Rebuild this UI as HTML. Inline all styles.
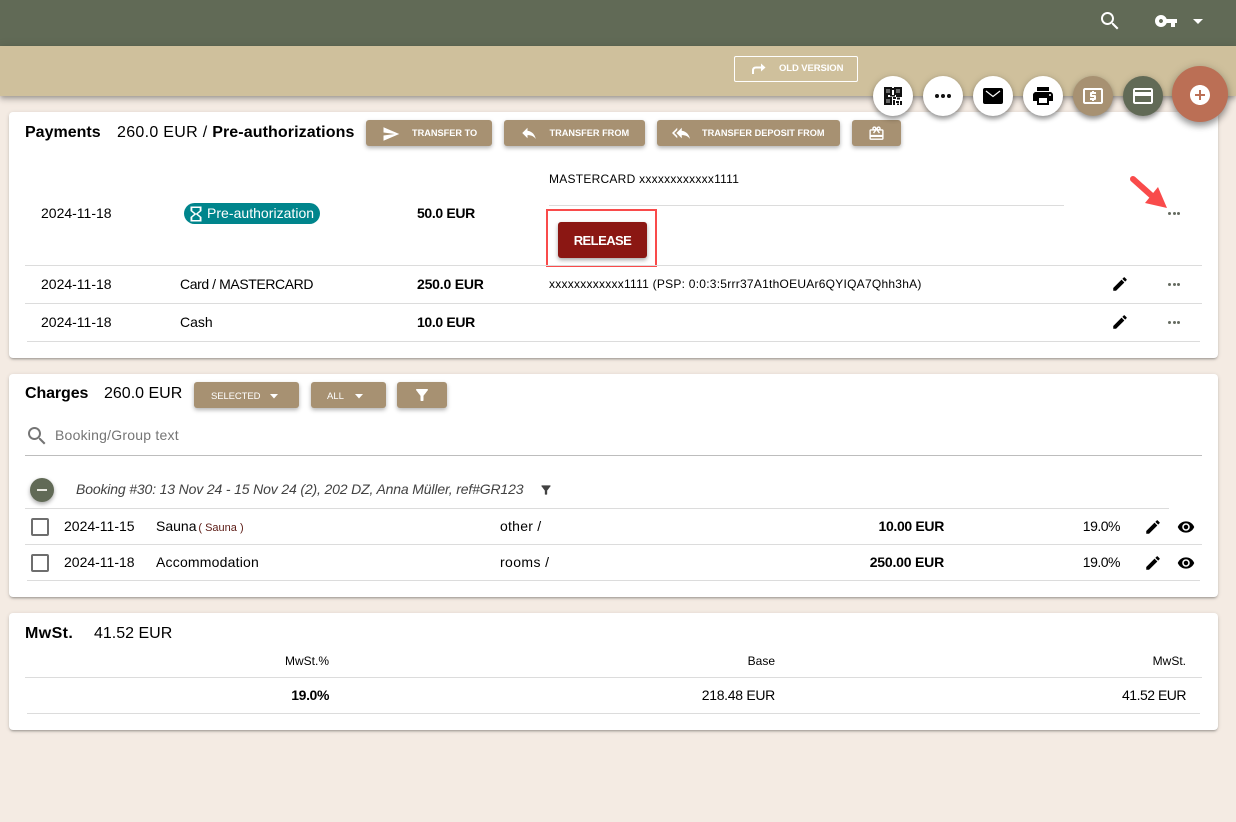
<!DOCTYPE html>
<html><head><meta charset="utf-8">
<style>
html,body{margin:0;padding:0;width:1236px;height:822px;overflow:hidden;background:#f4ebe3;font-family:"Liberation Sans",sans-serif;color:#000;font-size:14px}
.a{position:absolute}
.t{position:absolute;white-space:nowrap;line-height:20px;height:20px}
.r{text-align:right}
b{font-weight:700}
.card{position:absolute;left:9px;width:1209px;background:#fff;border-radius:4px;box-shadow:0 2px 2px -1px rgba(0,0,0,.3),0 1px 4px rgba(0,0,0,.14)}
.l{position:absolute;height:1px;background:#dcdcdc}
.btn{position:absolute;background:#a79172;border-radius:3px;box-shadow:0 2px 4px rgba(0,0,0,.3);color:#fff;font-weight:700;font-size:9.2px;line-height:27px;height:26px;white-space:nowrap}
.btn span{position:absolute;top:0}
svg{position:absolute;display:block}
.fab{position:absolute;width:40px;height:40px;border-radius:50%;background:#fff;box-shadow:0 3px 5px rgba(0,0,0,.35),0 1px 8px rgba(0,0,0,.15)}
.dots{position:absolute;width:13px;height:4px}
.dots i{position:absolute;top:1px;width:3px;height:3px;border-radius:50%;background:#666b61}
.cb{position:absolute;left:31px;width:14px;height:14px;border:2px solid #6e6e6e;border-radius:2px;background:#fff}
.k{position:absolute;width:4.2px;height:4.2px;border-radius:50%;background:#111;top:94px}
</style></head><body>

<div class="a" style="left:0;top:0;width:1236px;height:46px;background:#616a56"></div>
<div class="a" style="left:0;top:46px;width:1236px;height:50px;background:#cfc09c;box-shadow:0 2px 4px -1px rgba(0,0,0,.2),0 4px 5px rgba(0,0,0,.14),0 1px 10px rgba(0,0,0,.12)"></div>

<svg style="left:1098px;top:9px" width="24" height="24" viewBox="0 0 24 24" fill="#fff"><path d="M15.5 14h-.79l-.28-.27C15.41 12.59 16 11.11 16 9.5 16 5.91 13.09 3 9.5 3S3 5.91 3 9.5 5.91 16 9.5 16c1.61 0 3.09-.59 4.23-1.57l.27.28v.79l5 4.99L20.49 19l-4.99-5zm-6 0C7.01 14 5 11.99 5 9.5S7.01 5 9.5 5 14 7.01 14 9.5 11.99 14 9.5 14z"/></svg>
<svg style="left:1154px;top:9px" width="24" height="24" viewBox="0 0 24 24" fill="#fff"><path d="M12.65 10C11.83 7.67 9.61 6 7 6c-3.31 0-6 2.69-6 6s2.69 6 6 6c2.61 0 4.83-1.67 5.65-4H17v4h4v-4h2v-4H12.65zM7 14c-1.1 0-2-.9-2-2s.9-2 2-2 2 .9 2 2-.9 2-2 2z"/></svg>
<svg style="left:1192px;top:18px" width="12" height="7" viewBox="0 0 12 7" fill="#fff"><path d="M1 1h10L6 6z"/></svg>

<div class="a" style="left:734px;top:56px;width:122px;height:24px;border:1px solid #fff;border-radius:2px"></div>
<svg style="left:751px;top:60px" width="16" height="16" viewBox="0 0 16 16" fill="none" stroke="#fff" stroke-width="2"><path d="M2 14V10.5C2 8.5 3 7.5 5 7.5H11"/><path d="M10 3.5L14.5 7.5L10 11.5" fill="#fff" stroke="none"/></svg>
<div class="t" style="left:779px;top:59px;font-size:9.5px;font-weight:700;color:#fff;letter-spacing:-.1px">OLD VERSION</div>

<!-- card 1 -->
<div class="card" style="top:112px;height:246px"></div>
<div class="t" style="left:25px;top:123px;font-size:16px;font-weight:700">Payments</div>
<div class="t" style="left:117px;top:123px;font-size:16px;letter-spacing:.3px">260.0 EUR / <b style="letter-spacing:.1px">Pre-authorizations</b></div>

<div class="btn" style="left:366px;top:120px;width:126px"><svg style="left:16px;top:5px" width="18" height="18" viewBox="0 0 24 24" fill="#fff"><path d="M2.01 21L23 12 2.01 3 2 10l15 2-15 2z"/></svg><span style="left:46px">TRANSFER TO</span></div>
<div class="btn" style="left:504px;top:120px;width:141px"><svg style="left:16px;top:4px" width="18" height="18" viewBox="0 0 24 24" fill="#fff"><path d="M10 9V5l-7 7 7 7v-4.1c5 0 8.5 1.6 11 5.1-1-5-4-10-11-11z"/></svg><span style="left:45.5px">TRANSFER FROM</span></div>
<div class="btn" style="left:657px;top:120px;width:183px"><svg style="left:15px;top:4px" width="18" height="18" viewBox="0 0 24 24" fill="#fff"><path d="M7 8V5l-7 7 7 7v-3l-4-4 4-4zm6 1V5l-7 7 7 7v-4.1c5 0 8.5 1.6 11 5.1-1-5-4-10-11-11z"/></svg><span style="left:45px">TRANSFER DEPOSIT FROM</span></div>
<div class="btn" style="left:852px;top:120px;width:49px"><svg style="left:16px;top:5px" width="17" height="17" viewBox="0 0 24 24" fill="#fff"><path d="M20 6h-2.18c.11-.31.18-.65.18-1 0-1.66-1.34-3-3-3-1.05 0-1.96.54-2.5 1.35l-.5.67-.5-.68C10.96 2.54 10.05 2 9 2 7.34 2 6 3.34 6 5c0 .35.07.69.18 1H4c-1.11 0-1.99.89-1.99 2L2 19c0 1.11.89 2 2 2h16c1.11 0 2-.89 2-2V8c0-1.11-.89-2-2-2zm-5-2c.55 0 1 .45 1 1s-.45 1-1 1-1-.45-1-1 .45-1 1-1zM9 4c.55 0 1 .45 1 1s-.45 1-1 1-1-.45-1-1 .45-1 1-1zm11 15H4v-2h16v2zm0-5H4V8h5.08L7 10.83 8.62 12 11 8.76l1-1.36 1 1.36L15.38 12 17 10.83 14.92 8H20v6z"/></svg></div>

<div class="t" style="left:549px;top:169px;font-size:12px;letter-spacing:.25px">MASTERCARD xxxxxxxxxxxx1111</div>
<div class="l" style="left:549px;top:205px;width:515px"></div>

<div class="t" style="left:41px;top:203px">2024-11-18</div>
<div class="a" style="left:184px;top:203px;width:136px;height:21px;border-radius:11px;background:#00858c"></div>
<svg style="left:184.5px;top:205px" width="22" height="18" viewBox="0 0 24 24" preserveAspectRatio="none" fill="#fff"><path d="M6 2v6h.01L6 8.01 10 12l-4 4 .01.01H6V22h12v-5.99h-.01L18 16l-4-4 4-3.99-.01-.01H18V2H6zm10 14.5V20H8v-3.5l4-4 4 4zm-4-5l-4-4V4h8v3.5l-4 4z"/></svg>
<div class="t" style="left:207px;top:203px;color:#fff;letter-spacing:.03px">Pre-authorization</div>
<div class="t" style="left:417px;top:203px;font-weight:700;letter-spacing:-.35px">50.0 EUR</div>

<div class="a" style="left:546px;top:209px;width:111px;height:58px;border:2px solid #f94b4b;box-sizing:border-box"></div>
<div class="a" style="left:558px;top:222px;width:89px;height:36px;background:#8b1713;border-radius:3px;box-shadow:0 2px 4px rgba(0,0,0,.35);color:#fff;font-weight:700;font-size:13px;letter-spacing:-.55px;line-height:37px;text-align:center">RELEASE</div>

<svg style="left:1126px;top:172px" width="48" height="40" viewBox="0 0 48 40"><path d="M7 7L26 24" stroke="#f94b4b" stroke-width="6" stroke-linecap="round"/><path d="M19 31L32 15L41 36z" fill="#f94b4b"/></svg>
<div class="dots" style="left:1168px;top:211px"><i style="left:0"></i><i style="left:4.7px"></i><i style="left:9.4px"></i></div>

<div class="l" style="left:25px;top:265px;width:1177px"></div>
<div class="t" style="left:41px;top:274px">2024-11-18</div>
<div class="t" style="left:180px;top:274px;letter-spacing:-.41px">Card / MASTERCARD</div>
<div class="t" style="left:417px;top:274px;font-weight:700;letter-spacing:-.2px">250.0 EUR</div>
<div class="t" style="left:549px;top:274px;font-size:12px;letter-spacing:.25px">xxxxxxxxxxxx1111 (PSP: 0:0:3:5rrr37A1thOEUAr6QYIQA7Qhh3hA)</div>
<svg style="left:1111px;top:275px" width="18" height="18" viewBox="0 0 24 24"><path d="M3 17.25V21h3.75L17.81 9.94l-3.75-3.75L3 17.25zM20.71 7.04c.39-.39.39-1.02 0-1.41l-2.34-2.34c-.39-.39-1.02-.39-1.41 0l-1.83 1.83 3.75 3.75 1.83-1.83z"/></svg>
<div class="dots" style="left:1168px;top:282px"><i style="left:0"></i><i style="left:4.7px"></i><i style="left:9.4px"></i></div>

<div class="l" style="left:25px;top:303px;width:1177px"></div>
<div class="t" style="left:41px;top:312px">2024-11-18</div>
<div class="t" style="left:180px;top:312px">Cash</div>
<div class="t" style="left:417px;top:312px;font-weight:700;letter-spacing:-.35px">10.0 EUR</div>
<svg style="left:1111px;top:313px" width="18" height="18" viewBox="0 0 24 24"><path d="M3 17.25V21h3.75L17.81 9.94l-3.75-3.75L3 17.25zM20.71 7.04c.39-.39.39-1.02 0-1.41l-2.34-2.34c-.39-.39-1.02-.39-1.41 0l-1.83 1.83 3.75 3.75 1.83-1.83z"/></svg>
<div class="dots" style="left:1168px;top:320px"><i style="left:0"></i><i style="left:4.7px"></i><i style="left:9.4px"></i></div>
<div class="l" style="left:27px;top:341px;width:1173px"></div>

<!-- card 2 -->
<div class="card" style="top:374px;height:223px"></div>
<div class="t" style="left:25px;top:384px;font-size:16px;font-weight:700;letter-spacing:-.1px">Charges</div>
<div class="t" style="left:104px;top:384px;font-size:16px">260.0 EUR</div>
<div class="btn" style="left:194px;top:382px;width:105px"><span style="left:17px;top:1px;font-weight:400;font-size:9.5px;letter-spacing:-.1px">SELECTED</span><svg style="left:76px;top:12px" width="8" height="5" viewBox="0 0 8 5" fill="#fff"><path d="M0 0h8L4 4.5z"/></svg></div>
<div class="btn" style="left:311px;top:382px;width:75px"><span style="left:16px;top:1px;font-weight:400;font-size:9.5px">ALL</span><svg style="left:44px;top:12px" width="8" height="5" viewBox="0 0 8 5" fill="#fff"><path d="M0 0h8L4 4.5z"/></svg></div>
<div class="btn" style="left:397px;top:382px;width:50px"><svg style="left:16px;top:4px" width="18" height="18" viewBox="0 0 24 24" fill="#fff"><path d="M4.25 5.61C6.27 8.2 10 13 10 13v6c0 .55.45 1 1 1h2c.55 0 1-.45 1-1v-6s3.72-4.8 5.74-7.39c.51-.66.04-1.61-.79-1.61H5.04c-.83 0-1.3.95-.79 1.61z"/></svg></div>

<svg style="left:25px;top:424px" width="24" height="24" viewBox="0 0 24 24" fill="#757575"><path d="M15.5 14h-.79l-.28-.27C15.41 12.59 16 11.11 16 9.5 16 5.91 13.09 3 9.5 3S3 5.91 3 9.5 5.91 16 9.5 16c1.61 0 3.09-.59 4.23-1.57l.27.28v.79l5 4.99L20.49 19l-4.99-5zm-6 0C7.01 14 5 11.99 5 9.5S7.01 5 9.5 5 14 7.01 14 9.5 11.99 14 9.5 14z"/></svg>
<div class="t" style="left:55px;top:425px;color:#757575;letter-spacing:.22px">Booking/Group text</div>
<div class="a" style="left:25px;top:455px;width:1177px;height:1px;background:#bdbdbd"></div>

<div class="a" style="left:30px;top:478px;width:24px;height:24px;border-radius:50%;background:#616a56;box-shadow:0 2px 4px rgba(0,0,0,.35)"></div>
<div class="a" style="left:37px;top:489px;width:10px;height:2px;background:#e8e8e0"></div>
<div class="t" style="left:76px;top:479px;font-style:italic;color:#424242;letter-spacing:-.15px">Booking #30: 13 Nov 24 - 15 Nov 24 (2), 202 DZ, Anna Müller, ref#GR123</div>
<svg style="left:539px;top:483px" width="14" height="14" viewBox="0 0 24 24" fill="#424242"><path d="M4.25 5.61C6.27 8.2 10 13 10 13v6c0 .55.45 1 1 1h2c.55 0 1-.45 1-1v-6s3.72-4.8 5.74-7.39c.51-.66.04-1.61-.79-1.61H5.04c-.83 0-1.3.95-.79 1.61z"/></svg>
<div class="l" style="left:25px;top:508px;width:1144px"></div>

<div class="cb" style="top:518px"></div>
<div class="t" style="left:64px;top:516px">2024-11-15</div>
<div class="t" style="left:156px;top:516px">Sauna <span style="font-size:11px;color:#5b1a14;margin-left:-2px">( Sauna )</span></div>
<div class="t" style="left:500px;top:516px;letter-spacing:.25px">other /</div>
<div class="t r" style="left:744px;width:200px;top:516px;font-weight:700;letter-spacing:-.33px">10.00 EUR</div>
<div class="t r" style="left:1020px;width:100px;top:516px;letter-spacing:-.5px">19.0%</div>
<svg style="left:1144px;top:518px" width="18" height="18" viewBox="0 0 24 24"><path d="M3 17.25V21h3.75L17.81 9.94l-3.75-3.75L3 17.25zM20.71 7.04c.39-.39.39-1.02 0-1.41l-2.34-2.34c-.39-.39-1.02-.39-1.41 0l-1.83 1.83 3.75 3.75 1.83-1.83z"/></svg>
<svg style="left:1177px;top:518px" width="18" height="18" viewBox="0 0 24 24"><path d="M12 4.5C7 4.5 2.73 7.61 1 12c1.73 4.39 6 7.5 11 7.5s9.27-3.11 11-7.5c-1.73-4.39-6-7.5-11-7.5zM12 17c-2.76 0-5-2.24-5-5s2.24-5 5-5 5 2.24 5 5-2.24 5-5 5zm0-8c-1.66 0-3 1.34-3 3s1.34 3 3 3 3-1.34 3-3-1.34-3-3-3z"/></svg>
<div class="l" style="left:25px;top:544px;width:1177px"></div>

<div class="cb" style="top:554px"></div>
<div class="t" style="left:64px;top:552px">2024-11-18</div>
<div class="t" style="left:156px;top:552px;letter-spacing:.2px">Accommodation</div>
<div class="t" style="left:500px;top:552px;letter-spacing:.4px">rooms /</div>
<div class="t r" style="left:744px;width:200px;top:552px;font-weight:700;letter-spacing:-.2px">250.00 EUR</div>
<div class="t r" style="left:1020px;width:100px;top:552px;letter-spacing:-.5px">19.0%</div>
<svg style="left:1144px;top:554px" width="18" height="18" viewBox="0 0 24 24"><path d="M3 17.25V21h3.75L17.81 9.94l-3.75-3.75L3 17.25zM20.71 7.04c.39-.39.39-1.02 0-1.41l-2.34-2.34c-.39-.39-1.02-.39-1.41 0l-1.83 1.83 3.75 3.75 1.83-1.83z"/></svg>
<svg style="left:1177px;top:554px" width="18" height="18" viewBox="0 0 24 24"><path d="M12 4.5C7 4.5 2.73 7.61 1 12c1.73 4.39 6 7.5 11 7.5s9.27-3.11 11-7.5c-1.73-4.39-6-7.5-11-7.5zM12 17c-2.76 0-5-2.24-5-5s2.24-5 5-5 5 2.24 5 5-2.24 5-5 5zm0-8c-1.66 0-3 1.34-3 3s1.34 3 3 3 3-1.34 3-3-1.34-3-3-3z"/></svg>
<div class="l" style="left:27px;top:580px;width:1173px"></div>

<!-- card 3 -->
<div class="card" style="top:613px;height:117px"></div>
<div class="t" style="left:25px;top:624px;font-size:16px;font-weight:700;letter-spacing:.4px">MwSt.</div>
<div class="t" style="left:94px;top:624px;font-size:16px">41.52 EUR</div>
<div class="t r" style="left:129px;width:200px;top:651px;font-size:12px">MwSt.%</div>
<div class="t r" style="left:575px;width:200px;top:651px;font-size:12px">Base</div>
<div class="t r" style="left:986px;width:200px;top:651px;font-size:12px">MwSt.</div>
<div class="l" style="left:25px;top:677px;width:1177px"></div>
<div class="t r" style="left:129px;width:200px;top:685px;font-weight:700;letter-spacing:-.4px">19.0%</div>
<div class="t r" style="left:575px;width:200px;top:685px;letter-spacing:-.3px">218.48 EUR</div>
<div class="t r" style="left:986px;width:200px;top:685px;letter-spacing:-.5px">41.52 EUR</div>
<div class="l" style="left:27px;top:713px;width:1173px"></div>

<!-- FABs -->
<div class="fab" style="left:873px;top:76px"></div>
<svg style="left:884px;top:87px" width="18" height="18" viewBox="0 0 18 18"><path d="M0 0h8v8H0zM10 0h8v8h-8zM0 10h8v8H0z" fill="#111"/><path d="M2 2h4v4H2zM12 2h4v4h-4zM2 12h4v4H2z" fill="#666"/><path d="M8 1h2v2H8zM0 8h4v2H0zM6 8h5v1.5H6zM12 8h6v2h-6zM9 10h3v2H9zM13 10.5h3v2h-3zM9 13h2v5H9zM12 14h3v2h-3zM16 14h2v4h-2zM13 16.5h2V18h-2z" fill="#111"/></svg>
<div class="fab" style="left:923px;top:76px"></div>
<div class="k" style="left:935px"></div><div class="k" style="left:941px"></div><div class="k" style="left:947px"></div>
<div class="fab" style="left:973px;top:76px"></div>
<svg style="left:981px;top:84px" width="24" height="24" viewBox="0 0 24 24"><rect x="2" y="4" width="20" height="16" rx="2"/><path d="M5 7L12 12.5L19 7" fill="none" stroke="#fff" stroke-width="1.2"/></svg>
<div class="fab" style="left:1023px;top:76px"></div>
<svg style="left:1031px;top:84px" width="24" height="24" viewBox="0 0 24 24"><path d="M19 8H5c-1.66 0-3 1.34-3 3v6h4v4h12v-4h4v-6c0-1.66-1.34-3-3-3zm-3 11H8v-5h8v5zm3-7c-.55 0-1-.45-1-1s.45-1 1-1 1 .45 1 1-.45 1-1 1zm-1-9H6v4h12V3z"/></svg>
<div class="fab" style="left:1073px;top:76px;background:#a79172"></div>
<svg style="left:1081px;top:84px" width="24" height="24" viewBox="0 0 24 24" fill="#fff"><path d="M11 17h2v-1h1c.55 0 1-.45 1-1v-3c0-.55-.45-1-1-1h-3v-1h4V8h-2V7h-2v1h-1c-.55 0-1 .45-1 1v3c0 .55.45 1 1 1h3v1H9v2h2v1zm9-13H4c-1.11 0-1.99.89-1.99 2L2 18c0 1.11.89 2 2 2h16c1.11 0 2-.89 2-2V6c0-1.11-.89-2-2-2zm0 14H4V6h16v12z"/></svg>
<div class="fab" style="left:1123px;top:76px;background:#616a56"></div>
<svg style="left:1131px;top:84px" width="24" height="24" viewBox="0 0 24 24" fill="#fff"><path d="M20 4H4c-1.11 0-1.99.89-1.99 2L2 18c0 1.11.89 2 2 2h16c1.11 0 2-.89 2-2V6c0-1.11-.89-2-2-2zm0 14H4v-6h16v6zm0-10H4V6h16v2z"/></svg>
<div class="fab" style="left:1172px;top:66px;width:56px;height:56px;background:#bb6f55;box-shadow:0 4px 7px rgba(0,0,0,.35),0 1px 10px rgba(0,0,0,.15)"></div>
<svg style="left:1188px;top:83px" width="24" height="24" viewBox="0 0 24 24" fill="#fff"><path d="M12 2C6.48 2 2 6.48 2 12s4.48 10 10 10 10-4.48 10-10S17.52 2 12 2zm5 11h-4v4h-2v-4H7v-2h4V7h2v4h4v2z"/></svg>

</body></html>
